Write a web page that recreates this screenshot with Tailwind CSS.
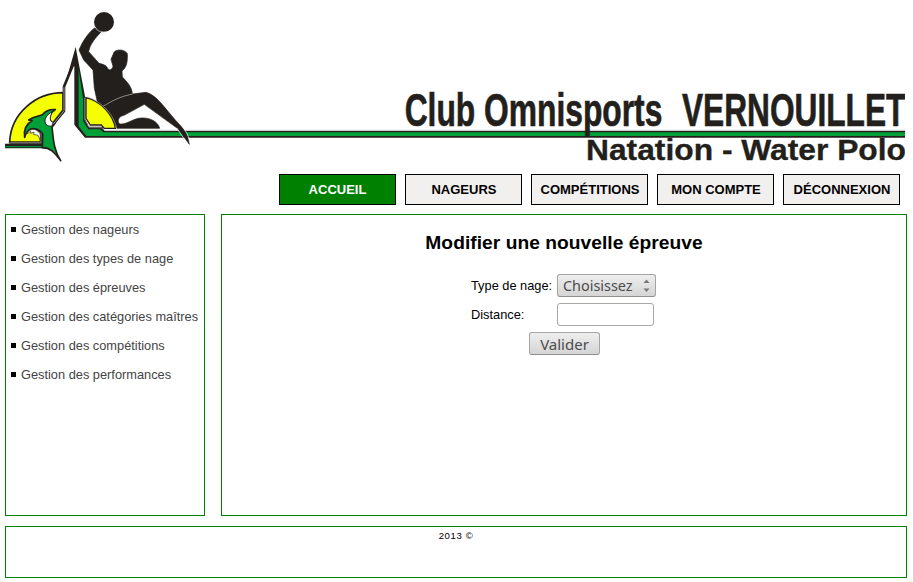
<!DOCTYPE html>
<html lang="fr">
<head>
<meta charset="utf-8">
<title>Club Omnisports Vernouillet</title>
<script src="https://cdn.jsdelivr.net/npm/@tailwindcss/browser@4"></script>
</head>
<body class="bg-white text-black font-['Liberation_Sans',Arial,sans-serif] text-[12.8px] leading-[15px] w-[913px] h-[582px] overflow-hidden pl-[5px] pt-[10px]">
<header class="h-[164px]">
<svg class="block" width="900" height="153" viewBox="15 30 2700 459" role="img" aria-label="Club Omnisports Vernouillet">
  <!-- base line, left -->
  <path d="M15 431H127L165 450V445H15Z" fill="#231f1c"/>
  <path d="M15 438H130V442H15Z" fill="#008a38"/>
  <!-- yellow sun and wave -->
  <path d="M189 278C108 278 32 340 29 427H122V396L105 388 158 370 189 330Z" fill="#f4ff00" stroke="#231f1c" stroke-width="5"/>
  <path d="M74 412C70 386 80 371 96 362L86 360C104 347 122 349 128 343C139 331 151 327 166 329C151 339 147 352 151 362C154 369 160 370 166 368L156 382C160 412 160 450 182 482C166 462 155 443 127 443L128 402C117 386 96 381 86 391C80 396 76 402 74 412Z" fill="#00a039" stroke="#231f1c" stroke-width="5" stroke-linejoin="round"/>
  <path d="M80 402C86 387 104 385 113 393L123 404V424L113 405 101 404 102 396 92 400 92 394Z" fill="#fff" stroke="#231f1c" stroke-width="2"/>
  <path d="M158 335C140 343 132 357 136 369C140 378 151 381 158 376L166 367C151 370 145 355 158 335Z" fill="#fff" stroke="#231f1c" stroke-width="3"/>
  <path d="M29 428H123V398" fill="none" stroke="#231f1c" stroke-width="7"/>
  <path d="M29 428H123V398" fill="none" stroke="#aaa5a0" stroke-width="2"/>
  <path d="M158 375L192 333V260L219 194" fill="none" stroke="#231f1c" stroke-width="8"/>
  <path d="M160 372L192 332V262" fill="none" stroke="#9b9692" stroke-width="3"/>
  <!-- mast and green beam -->
  <path d="M227 141L193 260L215 198Q219 190 223 200V374L255 413H2715V393H314L307 380H267L256 358V294Z" fill="#231f1c"/>
  <path d="M236 207L249 298V362L265 388H300L310 397H2715V408H259L236 379Z" fill="#00a039"/>
  <path d="M253 293V357L268 383H304L313 391H2715" fill="none" stroke="#aaa5a0" stroke-width="2"/>
  <!-- swimmer -->
  <path d="M284 84C266 97 248 123 237 150L251 180 279 210 283 265 293 310 320 327 351 385H479C475 365 449 352 424 354C399 355 379 375 359 372C350 363 356 349 372 346L433 313 532 385 568 433C565 408 553 388 539 374C502 337 474 286 438 277L397 282C397 263 381 245 367 231L366 213C379 202 383 190 382 161C374 147 348 147 342 157L333 178 339 199C336 211 327 213 322 203C316 193 304 192 297 190L266 155C270 132 285 115 304 95Z" fill="#231f1c" stroke="#231f1c" stroke-width="2"/>
  <path d="M309 319C338 302 358 290 398 282" fill="none" stroke="#c2beb9" stroke-width="2"/>
  <path d="M530 384L566 436M542 374C556 390 569 410 572 436" fill="none" stroke="#fff" stroke-width="2"/>
  <circle cx="312" cy="66" r="30" fill="#231f1c"/>
  <path d="M287 85Q301 101 317 95" fill="none" stroke="#d4d0cc" stroke-width="2"/>
  <path d="M258 293C305 304 340 346 346 385H313L304 375H271L258 355Z" fill="#f4ff00" stroke="#231f1c" stroke-width="4"/>
  <path d="M263 291C307 306 344 346 350 387" fill="none" stroke="#aaa5a0" stroke-width="2"/>
  <!-- club name -->
  <g fill="#231f1c" stroke="#231f1c" font-family="Liberation Sans, Arial, sans-serif" font-weight="700">
    <text x="1214" y="378" font-size="136" stroke-width="2" textLength="773" lengthAdjust="spacingAndGlyphs">Club Omnisports</text>
    <text x="2046" y="378" font-size="136" stroke-width="2" textLength="670" lengthAdjust="spacingAndGlyphs">VERNOUILLET</text>
    <text x="1758" y="480" font-size="88" stroke-width="1" textLength="960" lengthAdjust="spacingAndGlyphs">Natation - Water Polo</text>
  </g>
</svg>
</header>
<nav class="flex gap-[9px] ml-[274px] font-bold text-[13px]">
  <a class="w-[117px] h-[31px] border border-black bg-[green] text-white flex items-center justify-center whitespace-nowrap">ACCUEIL</a>
  <a class="w-[117px] h-[31px] border border-black bg-[#f2f0ef] flex items-center justify-center whitespace-nowrap pl-px">NAGEURS</a>
  <a class="w-[117px] h-[31px] border border-black bg-[#f2f0ef] flex items-center justify-center whitespace-nowrap pl-px">COMPÉTITIONS</a>
  <a class="w-[117px] h-[31px] border border-black bg-[#f2f0ef] flex items-center justify-center whitespace-nowrap pl-px">MON COMPTE</a>
  <a class="w-[117px] h-[31px] border border-black bg-[#f2f0ef] flex items-center justify-center whitespace-nowrap pl-px">DÉCONNEXION</a>
</nav>
<div class="flex gap-4 mt-[9px]">
  <aside class="w-[200px] h-[302px] border border-[green] pt-[7px] pl-[5px]">
    <ul class="flex flex-col gap-[14px] text-[#444] whitespace-nowrap">
      <li class="flex items-center gap-[5px]"><span class="size-[5px] bg-black"></span>Gestion des nageurs</li>
      <li class="flex items-center gap-[5px]"><span class="size-[5px] bg-black"></span>Gestion des types de nage</li>
      <li class="flex items-center gap-[5px]"><span class="size-[5px] bg-black"></span>Gestion des épreuves</li>
      <li class="flex items-center gap-[5px]"><span class="size-[5px] bg-black"></span>Gestion des catégories maîtres</li>
      <li class="flex items-center gap-[5px]"><span class="size-[5px] bg-black"></span>Gestion des compétitions</li>
      <li class="flex items-center gap-[5px]"><span class="size-[5px] bg-black"></span>Gestion des performances</li>
    </ul>
  </aside>
  <main class="w-[686px] h-[302px] border border-[green] pt-[16px] flex flex-col items-center">
    <h1 class="text-[19.2px] leading-[24px] font-bold whitespace-nowrap tracking-[0.04px]">Modifier une nouvelle épreuve</h1>
    <form class="mt-[19px] w-[186px]">
      <div class="flex items-center h-[23px] w-[186px]">
        <label class="w-[86px] shrink-0 whitespace-nowrap">Type de nage:</label>
        <div class="w-[99px] h-[23px] shrink-0 rounded-[3px] border border-[#a5a4a2] border-b-[#8f8e8c] bg-linear-to-b from-[#eeeeee] to-[#d5d5d5] flex items-center justify-between pl-[5px] pr-[5px] text-[#4c4c4c] font-['Noto_Sans',sans-serif] text-[14.4px]">
          <span>Choisissez</span>
          <svg width="7" height="13" viewBox="0 0 7 13" fill="#777"><path d="M.5 4L3.5 .5 6.5 4ZM.5 9.5L3.5 13 6.5 9.5Z"/></svg>
        </div>
      </div>
      <div class="flex items-center h-[23px] mt-[6px]">
        <label class="w-[86px] shrink-0">Distance:</label>
        <input class="w-[97px] h-[23px] rounded-[3px] border border-[#aaa8a5] bg-white" type="text">
      </div>
      <button type="button" class="block mt-[6px] ml-[58px] w-[71px] h-[23px] rounded-[3px] border border-[#a5a4a2] border-b-[#8f8e8c] bg-linear-to-b from-[#eeeeee] to-[#d5d5d5] text-[#4c4c4c] font-['Noto_Sans',sans-serif] text-[15px] leading-[20px]">Valider</button>
    </form>
  </main>
</div>
<footer class="mt-[10px] w-[902px] h-[52px] border border-[green] pt-[3px] text-center text-[9.6px] leading-[12px] tracking-[0.6px]">2013 ©</footer>
</body>
</html>
